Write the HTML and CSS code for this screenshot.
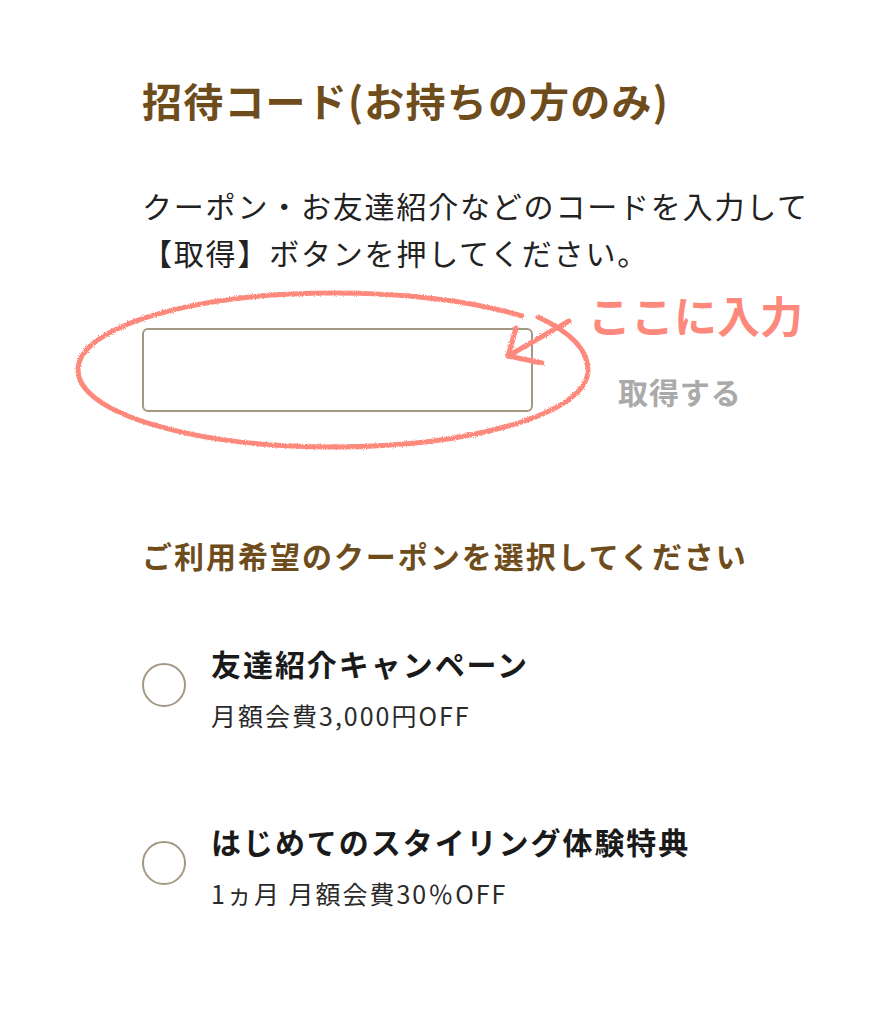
FILE: index.html
```html
<!DOCTYPE html>
<html lang="ja">
<head>
    <meta charset="UTF-8">
    <meta name="viewport" content="width=device-width, initial-scale=1.0">
    <title>招待コード</title>
    <link rel="stylesheet" href="styles.css">
</head>
<body>
    <div class="page">
        <h1 class="title">招待コード(お持ちの方のみ)</h1>
        <p class="lead">クーポン・お友達紹介などのコードを入力して<br>【取得】ボタンを押してください。</p>

        <div class="code-row">
            <input type="text" class="code-input">
            <button class="get-button" disabled>取得する</button>
        </div>

        <h2 class="sub-title">ご利用希望のクーポンを選択してください</h2>

        <label class="coupon">
            <span class="radio"></span>
            <span class="coupon-text">
                <span class="coupon-name">友達紹介キャンペーン</span>
                <span class="coupon-desc">月額会費3,000円OFF</span>
            </span>
        </label>

        <label class="coupon">
            <span class="radio"></span>
            <span class="coupon-text">
                <span class="coupon-name">はじめてのスタイリング体験特典</span>
                <span class="coupon-desc">1ヵ月 月額会費30％OFF</span>
            </span>
        </label>

        <!-- 手書き風の注釈 -->
        <svg class="note-marks" width="883" height="1024" viewBox="0 0 883 1024">
            <defs>
                <filter id="crayon">
                    <feTurbulence type="fractalNoise" baseFrequency="1.1" numOctaves="2" seed="3"/>
                    <feDisplacementMap in="SourceGraphic" scale="3"/>
                </filter>
            </defs>
            <g fill="none" stroke="#fd897d" stroke-width="5" stroke-linecap="round" stroke-linejoin="round" filter="url(#crayon)">
                <path d="M522 316 C 470 300, 400 293, 333 293 C 193 293, 78 327, 78 370 C 78 413, 193 447, 333 447 C 473 447, 588 413, 588 370 C 588 348, 566 330, 538 317"/>
                <path d="M569 321 L508 356"/>
                <path d="M516 328 L508 356 L542 363"/>
            </g>
        </svg>
        <span class="note-text">ここに入力</span>
    </div>
</body>
</html>
```

FILE: styles.css
```css
body {
    margin: 0;
    padding: 0;
    background: #ffffff;
    font-family: "Noto Sans CJK JP", "Noto Sans", sans-serif;
    color: #1e1e1e;
}
.page {
    position: relative;
    width: 883px;
    height: 1024px;
    box-sizing: border-box;
    padding: 70px 0 0 142px;
    overflow: hidden;
}
.title {
    margin: 0;
    font-size: 40px;
    line-height: 60px;
    font-weight: bold;
    letter-spacing: 0.03em;
    color: #6f4c1b;
}
.lead {
    margin: 52px 0 0;
    font-size: 30px;
    line-height: 47px;
    letter-spacing: 0.06em;
    color: #222;
}
.code-row {
    display: flex;
    align-items: flex-end;
    margin-top: 52px;
}
.code-input {
    width: 391px;
    height: 84px;
    box-sizing: border-box;
    border: 2px solid #a39884;
    border-radius: 6px;
    background: #fff;
    padding: 0 16px;
    font-size: 28px;
}
.get-button {
    margin: 0 0 6px 85px;
    padding: 0;
    border: none;
    background: none;
    font-family: inherit;
    font-size: 30px;
    line-height: 30px;
    font-weight: bold;
    letter-spacing: 0.03em;
    color: #aaaaaa;
}
.sub-title {
    margin: 121px 0 0;
    font-size: 30px;
    line-height: 45px;
    font-weight: bold;
    letter-spacing: 0.066em;
    color: #6f4c1b;
}
.coupon {
    display: flex;
    align-items: center;
    margin-top: 84px;
}
.sub-title + .coupon {
    margin-top: 63px;
}
.radio {
    width: 44px;
    height: 44px;
    box-sizing: border-box;
    border: 2.5px solid #a39884;
    border-radius: 50%;
    margin: 0 25px 6px 0;
}
.coupon-text {
    display: flex;
    flex-direction: column;
}
.coupon-name {
    font-size: 30px;
    line-height: 44px;
    font-weight: bold;
    letter-spacing: 0.065em;
    color: #1a1a1a;
}
.coupon-desc {
    margin-top: 10px;
    font-size: 25px;
    line-height: 40px;
    letter-spacing: 0.08em;
    color: #2a2a2a;
}
.note-marks {
    position: absolute;
    left: 0;
    top: 0;
    pointer-events: none;
}
.note-text {
    position: absolute;
    left: 588px;
    top: 289px;
    font-size: 43px;
    line-height: 50px;
    font-weight: bold;
    color: #fd897d;
}
```
